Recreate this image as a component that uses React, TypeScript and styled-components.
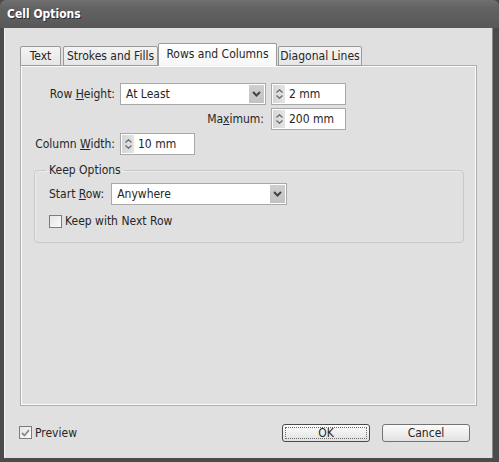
import React from "react";
import styled, { createGlobalStyle } from "styled-components";

const Global = createGlobalStyle`
  html, body { margin: 0; padding: 0; background: #4a4a4a; }
  body {
    font-family: "DejaVu Sans Condensed", "DejaVu Sans", "Liberation Sans", sans-serif;
    font-size: 12px;
    color: #262626;
  }
  * { box-sizing: border-box; }
`;

const Window = styled.div`
  width: 499px;
  height: 462px;
  display: flex;
  flex-direction: column;
  background: #4b4b4b;
  border-radius: 6px 6px 0 0;
  overflow: hidden;
`;

const TitleBar = styled.div`
  height: 28px;
  flex: none;
  display: flex;
  align-items: center;
  padding: 0 0 1px 7px;
  background: linear-gradient(#707070 0%, #626262 30%, #585858 100%);
  color: #fff;
  font-weight: bold;
  font-size: 12px;
  text-shadow: 1px 1px 0 #2e2e2e;
`;

const Frame = styled.div`
  flex: 1;
  display: flex;
  padding: 0 6px 4px 4px;
`;

const Body = styled.div`
  flex: 1;
  display: flex;
  flex-direction: column;
  padding: 15px 15px 0 15px;
  background: #e0e0e0;
  border-left: 1px solid #f2f2f2;
  border-right: 1px solid #8a8a8a;
`;

const TabBar = styled.div`
  height: 23px;
  flex: none;
  display: flex;
  align-items: flex-end;
  position: relative;
  z-index: 1;
`;

const Tab = styled.div<{ $active?: boolean; $w: number }>`
  width: ${(p) => p.$w}px;
  height: ${(p) => (p.$active ? 23 : 20)}px;
  margin-right: ${(p) => (p.$active ? 1 : 2)}px;
  margin-left: ${(p) => (p.$active ? -2 : 0)}px;
  display: flex;
  align-items: center;
  justify-content: center;
  padding-bottom: ${(p) => (p.$active ? 2 : 0)}px;
  border: 1px solid #9a9a9a;
  border-bottom: ${(p) => (p.$active ? "none" : "1px solid #9a9a9a")};
  border-radius: 2px 2px 0 0;
  background: ${(p) =>
    p.$active
      ? "linear-gradient(#ffffff, #f7f7f7)"
      : "linear-gradient(#f4f4f4, #e6e6e6)"};
  white-space: nowrap;
`;

const Panel = styled.div`
  height: 341px;
  flex: none;
  margin-top: -1px;
  padding: 17px 12px 0 13px;
  border: 1px solid #adadad;
  box-shadow: inset 1px 1px 0 #fbfbfb, inset -1px -1px 0 #fbfbfb;
  background: #e0e0e0;
`;

const SizeGrid = styled.div`
  display: grid;
  grid-template-columns: 81px 146px 75px;
  grid-auto-rows: 22px;
  column-gap: 5px;
  row-gap: 3px;
  align-items: center;
`;

const Label = styled.label<{ $right?: boolean }>`
  white-space: nowrap;
  text-align: right;
  padding-right: ${(p) => (p.$right ? 2 : 0)}px;
  u { text-decoration: underline; text-underline-offset: 1px; }
`;

const FieldBox = styled.div<{ $w: number }>`
  width: ${(p) => p.$w}px;
  height: 22px;
  display: flex;
  align-items: center;
  background: #fff;
  border: 1px solid #a9a9a9;
  padding: 1px;
`;

const FieldText = styled.span`
  flex: 1;
  padding-left: 4px;
  white-space: nowrap;
`;

const ArrowButton = styled.div`
  width: 15px;
  height: 18px;
  display: flex;
  align-items: center;
  justify-content: center;
  background: linear-gradient(#cfcfcf, #c2c2c2);
  color: #444;
`;

const SpinButtons = styled.div`
  width: 12px;
  height: 18px;
  display: flex;
  flex-direction: column;
  align-items: center;
  justify-content: center;
  gap: 2px;
  background: linear-gradient(90deg, #d6d6d6, #e4e4e4);
  color: #6a6a6a;
`;

const Group = styled.fieldset`
  margin: 8px 0 0 0;
  padding: 5px 14px 14px 14px;
  border: 1px solid #c8c8c8;
  border-radius: 4px;
  box-shadow: inset 1px 1px 0 #ececec;
  min-inline-size: 0;
  display: flex;
  flex-direction: column;
  gap: 9px;
`;

const Legend = styled.legend`
  padding: 0 3px;
  margin-left: -3px;
  line-height: 15px;
`;

const Row = styled.div<{ $gap: number }>`
  display: flex;
  align-items: center;
  gap: ${(p) => p.$gap}px;
  u { text-decoration: underline; text-underline-offset: 1px; }
`;

const Check = styled.div`
  width: 13px;
  height: 13px;
  flex: none;
  display: flex;
  align-items: center;
  justify-content: center;
  border: 1px solid #7c7c7c;
  background: linear-gradient(135deg, #e6e6e6, #fafafa);
`;

const Footer = styled.div`
  flex: 1;
  display: flex;
  align-items: center;
  padding: 1px 7px 0 0;
  margin-left: -1px;
`;

const Spacer = styled.div`
  flex: 1;
`;

const Button = styled.button<{ $focus?: boolean }>`
  width: 88px;
  height: 18px;
  margin-left: ${(p) => (p.$focus ? 0 : 12)}px;
  padding: 0;
  font: inherit;
  color: #262626;
  border: 1px solid ${(p) => (p.$focus ? "#4a4a4a" : "#737373")};
  border-radius: 3px;
  background: linear-gradient(#fbfbfb, #ececec 60%, #e2e2e2);
  position: relative;
  display: flex;
  align-items: center;
  justify-content: center;
  line-height: 14px;
  &::after {
    content: "";
    display: ${(p) => (p.$focus ? "block" : "none")};
    position: absolute;
    inset: 2px;
    border: 1px dotted #6a6a6a;
  }
`;

const Chevron = ({ up }: { up?: boolean }) => (
  <svg width="7" height="4" viewBox="0 0 7 4">
    <path
      d={up ? "M0.5 3.5 L3.5 0.8 L6.5 3.5" : "M0.5 0.5 L3.5 3.2 L6.5 0.5"}
      fill="none"
      stroke="currentColor"
      strokeWidth="1.3"
    />
  </svg>
);

const DownArrow = () => (
  <svg width="9" height="6" viewBox="0 0 9 6">
    <path d="M1 1 L4.5 4.5 L8 1" fill="none" stroke="currentColor" strokeWidth="2" />
  </svg>
);

const Dropdown = ({ w, value }: { w: number; value: string }) => (
  <FieldBox $w={w}>
    <FieldText>{value}</FieldText>
    <ArrowButton>
      <DownArrow />
    </ArrowButton>
  </FieldBox>
);

const Spinner = ({ value }: { value: string }) => (
  <FieldBox $w={75}>
    <SpinButtons>
      <Chevron up />
      <Chevron />
    </SpinButtons>
    <FieldText>{value}</FieldText>
  </FieldBox>
);

const CheckMark = () => (
  <svg width="9" height="8" viewBox="0 0 9 8">
    <path d="M1 4 L3.5 6.5 L8 1" fill="none" stroke="#8a8a8a" strokeWidth="1.8" />
  </svg>
);

const tabs = [
  { label: "Text", w: 41 },
  { label: "Strokes and Fills", w: 95 },
  { label: "Rows and Columns", w: 119, active: true },
  { label: "Diagonal Lines", w: 84 },
];

export default function App() {
  return (
    <>
      <Global />
      <Window>
        <TitleBar>Cell Options</TitleBar>
        <Frame>
          <Body>
            <TabBar>
              {tabs.map((t) => (
                <Tab key={t.label} $w={t.w} $active={t.active}>
                  {t.label}
                </Tab>
              ))}
            </TabBar>
            <Panel>
              <SizeGrid>
                <Label>
                  Row <u>H</u>eight:
                </Label>
                <Dropdown w={146} value="At Least" />
                <Spinner value="2 mm" />
                <span />
                <Label $right>
                  Ma<u>x</u>imum:
                </Label>
                <Spinner value="200 mm" />
                <Label>
                  Column <u>W</u>idth:
                </Label>
                <Spinner value="10 mm" />
              </SizeGrid>
              <Group>
                <Legend>Keep Options</Legend>
                <Row $gap={7}>
                  <span>
                    Start <u>R</u>ow:
                  </span>
                  <Dropdown w={176} value="Anywhere" />
                </Row>
                <Row $gap={3}>
                  <Check />
                  <span>Keep with Next Row</span>
                </Row>
              </Group>
            </Panel>
            <Footer>
              <Row $gap={3}>
                <Check>
                  <CheckMark />
                </Check>
                <span>Preview</span>
              </Row>
              <Spacer />
              <Button $focus>OK</Button>
              <Button>Cancel</Button>
            </Footer>
          </Body>
        </Frame>
      </Window>
    </>
  );
}
